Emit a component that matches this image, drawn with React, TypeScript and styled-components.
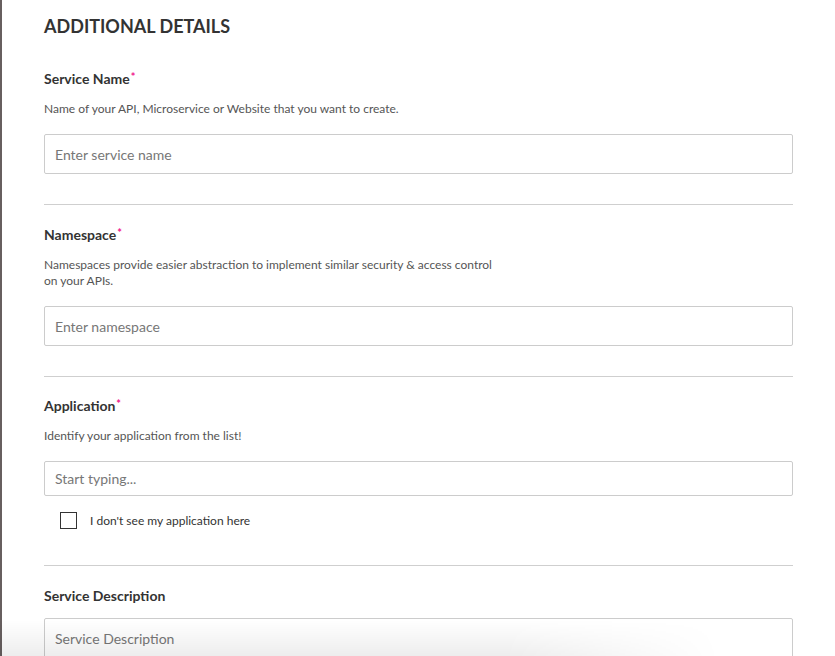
import React from "react";
import styled, { createGlobalStyle } from "styled-components";

const Global = createGlobalStyle`
  html, body { margin: 0; padding: 0; background: #fff; }
  body { font-family: Lato, "Open Sans", Arial, sans-serif; color: #333; overflow: hidden; }
  * { box-sizing: border-box; }
`;

const Page = styled.div`
  min-height: 656px;
  border-left: 2px solid #675f5f;
  padding: 14px 42px 0 42px;
`;

const Heading = styled.h2`
  margin: 0;
  font-size: 18px;
  line-height: 24px;
  font-weight: 700;
  color: #333;
`;

const Section = styled.section<{ $pt?: number; $last?: boolean }>`
  padding-top: ${(p) => p.$pt ?? 20}px;
  padding-bottom: 30px;
  border-bottom: ${(p) => (p.$last ? "none" : "1px solid #cfcfcf")};
`;

const Label = styled.div`
  font-size: 14px;
  line-height: 20px;
  font-weight: 700;
  color: #333;
`;

const Required = styled.span`
  color: #f0168c;
  font-size: 11px;
  vertical-align: top;
  position: relative;
  top: -2px;
  margin-left: 1px;
`;

const Helper = styled.p`
  margin: 12px 0 0 0;
  font-size: 12px;
  line-height: 16px;
  color: #555;
  max-width: 456px;
`;

const Input = styled.input<{ $h?: number; $mt?: number }>`
  display: block;
  width: 100%;
  height: ${(p) => p.$h ?? 40}px;
  margin-top: ${(p) => p.$mt ?? 17}px;
  border: 1px solid #cccccc;
  border-radius: 2px;
  padding: 0 10px;
  font-family: Lato, "Open Sans", Arial, sans-serif;
  font-size: 14px;
  color: #333;
  background: #fff;
  outline: none;
  &::placeholder { color: #777; }
`;

const CheckRow = styled.label`
  display: flex;
  align-items: center;
  gap: 13px;
  margin: 16px 0 6px 16px;
  font-size: 12px;
  line-height: 17px;
  color: #333;
`;

const Box = styled.span`
  width: 17px;
  height: 17px;
  border: 1.5px solid #333;
  display: inline-block;
`;

const BottomShade = styled.div`
  position: fixed;
  left: 0;
  bottom: 0;
  width: 720px;
  height: 36px;
  pointer-events: none;
  background: linear-gradient(to top, rgba(0, 0, 0, 0.07), rgba(0, 0, 0, 0));
  -webkit-mask-image: linear-gradient(to right, #000 0%, #000 70%, transparent 100%);
  mask-image: linear-gradient(to right, #000 0%, #000 70%, transparent 100%);
`;

export default function App() {
  return (
    <>
      <Global />
      <Page>
        <Heading>ADDITIONAL DETAILS</Heading>
        <Section $pt={31}>
          <Label>
            Service Name<Required>*</Required>
          </Label>
          <Helper>Name of your API, Microservice or Website that you want to create.</Helper>
          <Input placeholder="Enter service name" />
        </Section>
        <Section>
          <Label>
            Namespace<Required>*</Required>
          </Label>
          <Helper>
            Namespaces provide easier abstraction to implement similar security &amp; access control on your APIs.
          </Helper>
          <Input placeholder="Enter namespace" />
        </Section>
        <Section $pt={19}>
          <Label>
            Application<Required>*</Required>
          </Label>
          <Helper>Identify your application from the list!</Helper>
          <Input $h={35} placeholder="Start typing..." />
          <CheckRow>
            <Box />
            I don't see my application here
          </CheckRow>
        </Section>
        <Section $last>
          <Label>Service Description</Label>
          <Input $h={40} $mt={12} placeholder="Service Description" />
        </Section>
      </Page>
      <BottomShade />
    </>
  );
}
